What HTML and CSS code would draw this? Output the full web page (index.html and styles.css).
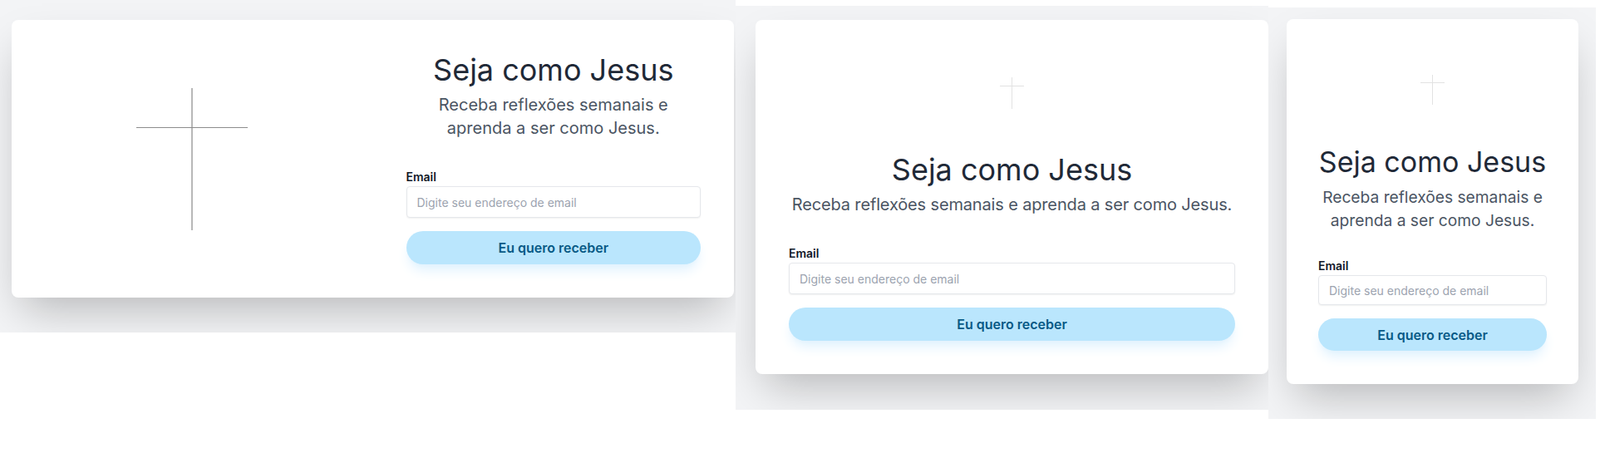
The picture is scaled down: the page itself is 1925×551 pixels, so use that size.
FILE: index.html
```html
<!DOCTYPE html>
<html lang="pt-BR">
<head>
<meta charset="utf-8">
<title>Seja como Jesus</title>
<link rel="stylesheet" href="styles.css">
</head>
<body>
<div class="shots">
  <section class="shot shot-wide">
    <div class="card card-split">
      <div class="card-media">
        <svg class="cross cross-lg" width="134" height="171" viewBox="0 0 134 171" aria-hidden="true">
          <line class="cross-v" x1="67" y1="0" x2="67" y2="171"/>
          <line class="cross-h" x1="0" y1="47.5" x2="134" y2="47.5"/>
        </svg>
      </div>
      <div class="card-body">
        <h1 class="title">Seja como Jesus</h1>
        <p class="lead lead-narrow">Receba reflexões semanais e aprenda a ser como Jesus.</p>
        <form class="form">
          <label class="label" for="email1">Email</label>
          <input class="input" id="email1" type="email" placeholder="Digite seu endereço de email">
          <button class="btn" type="button">Eu quero receber</button>
        </form>
      </div>
    </div>
  </section>

  <section class="shot shot-mid">
    <div class="card card-stack">
      <div class="media-box media-mid">
        <svg class="cross cross-sm" width="29" height="38" viewBox="0 0 29 38" aria-hidden="true">
          <line x1="14.5" y1="0" x2="14.5" y2="38"/>
          <line x1="0" y1="10.5" x2="29" y2="10.5"/>
        </svg>
      </div>
      <h1 class="title">Seja como Jesus</h1>
      <p class="lead lead-line">Receba reflexões semanais e aprenda a ser como Jesus.</p>
      <form class="form">
        <label class="label" for="email2">Email</label>
        <input class="input" id="email2" type="email" placeholder="Digite seu endereço de email">
        <button class="btn" type="button">Eu quero receber</button>
      </form>
    </div>
  </section>

  <section class="shot shot-narrow">
    <div class="card card-stack card-compact">
      <div class="media-box media-narrow">
        <svg class="cross cross-sm" width="29" height="36" viewBox="0 0 29 36" aria-hidden="true">
          <line x1="14.5" y1="0" x2="14.5" y2="36"/>
          <line x1="0" y1="9.5" x2="29" y2="9.5"/>
        </svg>
      </div>
      <h1 class="title">Seja como Jesus</h1>
      <p class="lead">Receba reflexões semanais e aprenda a ser como Jesus.</p>
      <form class="form">
        <label class="label" for="email3">Email</label>
        <input class="input" id="email3" type="email" placeholder="Digite seu endereço de email">
        <button class="btn" type="button">Eu quero receber</button>
      </form>
    </div>
  </section>
</div>
</body>
</html>
```

FILE: styles.css
```css
* {
  box-sizing: border-box;
}

html, body {
  margin: 0;
  padding: 0;
  background: #ffffff;
}

body {
  font-family: Inter, "Noto Sans", "Liberation Sans", sans-serif;
  color: #1f2937;
}

.shots {
  display: flex;
  align-items: flex-start;
}

.shot {
  background: #f3f4f6;
  overflow: hidden;
  flex: none;
}

.shot-wide {
  width: 885px;
  height: 400px;
  padding: 24px 2px 0 14px;
}

.shot-mid {
  width: 641px;
  height: 486px;
  margin-top: 7px;
  padding: 17px 0 0 24px;
}

.shot-narrow {
  width: 394px;
  height: 495px;
  margin-top: 9px;
  padding: 14px 21px 0 22px;
}

.card {
  background: #ffffff;
  border-radius: 8px;
  box-shadow: 0 25px 50px -12px rgba(0, 0, 0, 0.25);
}

.card-split {
  display: flex;
}

.card-media {
  flex: 0 0 50%;
  display: flex;
  align-items: center;
  justify-content: center;
}

.card-body {
  flex: 1 1 0;
  padding: 40px;
}

.card-stack {
  padding: 40px;
}

.card-compact {
  padding: 40px 38px;
}

.media-box {
  display: flex;
  align-items: center;
  justify-content: center;
}

.media-mid {
  height: 96px;
  margin-bottom: 24px;
}

.media-narrow {
  height: 90px;
  margin-bottom: 22px;
}

.cross {
  display: block;
}

.cross-lg .cross-v {
  stroke: #9a9a9a;
  stroke-width: 1.4;
}

.cross-lg .cross-h {
  stroke: #8c8c8c;
  stroke-width: 1;
}

.cross-sm line {
  stroke: #e2e2e2;
  stroke-width: 1;
}

.title {
  margin: 0;
  font-size: 36px;
  line-height: 40px;
  font-weight: 400;
  color: #1f2937;
  text-align: center;
  white-space: nowrap;
}

.lead {
  margin: 8px auto 0;
  font-size: 20px;
  line-height: 28px;
  color: #4b5563;
  text-align: center;
}

.lead-narrow {
  max-width: 300px;
}

.lead-line {
  white-space: nowrap;
  letter-spacing: -0.15px;
}

.form {
  margin-top: 35px;
}

.label {
  display: block;
  font-size: 14px;
  line-height: 20px;
  font-weight: 600;
  color: #111827;
  margin-bottom: 1px;
}

.input {
  display: block;
  width: 100%;
  height: 38px;
  padding: 0 12px;
  border: 1px solid #e5e7eb;
  border-radius: 4px;
  background: #ffffff;
  box-shadow: 0 1px 2px rgba(0, 0, 0, 0.06);
  font-family: inherit;
  font-size: 14px;
  color: #111827;
}

.input::placeholder {
  color: #9ca3af;
}

.btn {
  display: block;
  width: 100%;
  height: 40px;
  margin-top: 16px;
  border: none;
  border-radius: 9999px;
  background: #bae6fd;
  color: #075985;
  font-family: inherit;
  font-size: 16px;
  font-weight: 600;
  box-shadow: 0 10px 15px -3px #e0f2fe, 0 4px 6px -4px #e0f2fe;
}

.card-compact .title {
  font-size: 34px;
}

.card-compact .lead {
  font-size: 19.2px;
}

.card-compact .form {
  margin-top: 31px;
}

.card-compact .input {
  height: 36px;
}

.card-compact .btn {
  height: 39px;
}
```
